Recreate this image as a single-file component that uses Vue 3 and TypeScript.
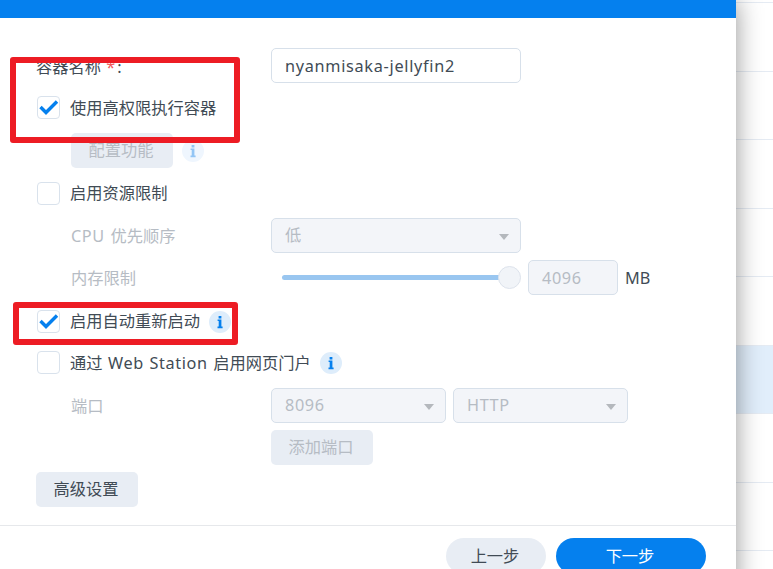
<script setup lang="ts">
const listRows = [false, false, false, false, false, false, true, false, false]
</script>

<template>
  <div class="page">
    <section class="dialog">
      <div class="titlebar"></div>
      <div class="form">
        <div class="row row-name">
          <span class="label">容器名称 <em class="req">*</em><span class="colon">:</span></span>
          <div class="field wide"><span class="lat name">nyanmisaka-jellyfin2</span></div>
        </div>

        <div class="row row-check1">
          <span class="box"><svg viewBox="0 0 21 21" class="tick"><path d="M2.5 10 L8 15.5 L19 4.5" /></svg></span>
          <span class="check-text low">使用高权限执行容器</span>
        </div>

        <div class="row row-config sub">
          <button class="btn disabled">配置功能</button>
          <svg class="info faint" viewBox="0 0 22 22"><circle cx="11" cy="11" r="11" /><path d="M9.6 5h2.8v2.4H9.6zM8.6 8.4h3.8v7.2h1.2v1.6H8.5v-1.6h1.2v-5.6H8.6z" /></svg>
        </div>

        <div class="row row-res">
          <span class="box"></span>
          <span class="check-text cjk">启用资源限制</span>
        </div>

        <div class="row row-cpu sub">
          <span class="sub-label low"><span class="lat">CPU </span>优先顺序</span>
          <div class="field wide select off"><span class="cjk">低</span><i class="caret"></i></div>
        </div>

        <div class="row row-mem sub">
          <span class="sub-label low">内存限制</span>
          <div class="slider">
            <div class="track"></div>
            <div class="thumb"></div>
          </div>
          <div class="field num off"><span class="lat">4096</span></div>
          <span class="unit">MB</span>
        </div>

        <div class="row row-auto">
          <span class="box"><svg viewBox="0 0 21 21" class="tick"><path d="M2.5 10 L8 15.5 L19 4.5" /></svg></span>
          <span class="check-text cjk">启用自动重新启动</span>
          <svg class="info" viewBox="0 0 22 22"><circle cx="11" cy="11" r="11" /><path d="M9.6 5h2.8v2.4H9.6zM8.6 8.4h3.8v7.2h1.2v1.6H8.5v-1.6h1.2v-5.6H8.6z" /></svg>
        </div>

        <div class="row row-web">
          <span class="box"></span>
          <span class="check-text low">通过<span class="lat"> Web Station </span>启用网页门户</span>
          <svg class="info" viewBox="0 0 22 22"><circle cx="11" cy="11" r="11" /><path d="M9.6 5h2.8v2.4H9.6zM8.6 8.4h3.8v7.2h1.2v1.6H8.5v-1.6h1.2v-5.6H8.6z" /></svg>
        </div>

        <div class="row row-port sub">
          <span class="sub-label low">端口</span>
          <div class="field port select off"><span class="lat raised">8096</span><i class="caret"></i></div>
          <div class="field proto select off"><span class="lat raised">HTTP</span><i class="caret"></i></div>
        </div>

        <div class="row row-add">
          <button class="btn disabled">添加端口</button>
        </div>

        <div class="row row-adv">
          <button class="btn">高级设置</button>
        </div>
      </div>

      <footer class="footer">
        <button class="pill prev">上一步</button>
        <button class="pill next">下一步</button>
      </footer>

      <div class="mark mark-a"></div>
      <div class="mark mark-b"></div>
    </section>

    <aside class="list">
      <div v-for="(active, i) in listRows" :key="i" class="list-row" :class="{ active }"></div>
    </aside>
  </div>
</template>

<style>
html, body { margin: 0; background: #fff; }
</style>

<style scoped>
.page {
  display: flex;
  width: 773px;
  height: 569px;
  overflow: hidden;
  font-family: "Noto Sans", "Noto Sans CJK SC", sans-serif;
  font-size: 16.25px;
  color: #414b55;
  background: #fff;
}
.dialog {
  position: relative;
  z-index: 1;
  flex: 0 0 736px;
  height: 620px;
  background: #fff;
  box-shadow: 0 0 24px rgba(0, 0, 0, 0.42);
}
.titlebar { height: 18px; background: #0580ee; }
.form { padding: 30px 0 0 36px; }
.row { display: flex; align-items: center; }
.sub { padding-left: 35px; }
.row-name { height: 35px; }
.row-check1 { height: 23px; margin-top: 13px; }
.row-config { height: 35px; margin-top: 14px; }
.row-res { height: 23px; margin-top: 14px; }
.row-cpu { height: 35px; margin-top: 13px; }
.row-mem { height: 35px; margin-top: 7px; }
.row-auto { height: 23px; margin-top: 15px; }
.row-web { height: 23px; margin-top: 18px; }
.row-port { height: 35px; margin-top: 14px; }
.row-add { height: 35px; margin-top: 7px; padding-left: 235px; }
.row-adv { height: 35px; margin-top: 7px; }

.cjk { padding-bottom: 3px; }
.low { padding-bottom: 1px; }
.raised { padding-bottom: 2px; }
.lat { letter-spacing: 0.6px; word-spacing: 0.8px; white-space: pre; }
.name { letter-spacing: 0.7px; }

.label { width: 235px; flex: none; }
.req { color: #ed1c24; font-style: normal; margin-left: 1px; opacity: 0.75; }
.colon { margin-left: 2px; }
.sub-label { width: 200px; flex: none; color: #b6bcc4; }

.box {
  flex: none;
  box-sizing: border-box;
  width: 23px;
  height: 23px;
  margin-left: 1px;
  border: 1.25px solid #d9e2ec;
  border-radius: 4px;
  background: #fff;
}
.tick { display: block; width: 21px; height: 21px; overflow: visible; }
.tick path { fill: none; stroke: #0580ee; stroke-width: 3.4; }
.check-text { margin-left: 10px; }

.field {
  box-sizing: border-box;
  height: 35px;
  border: 1px solid #d7e0ea;
  border-radius: 5px;
  padding: 0 13px;
  display: flex;
  align-items: center;
  justify-content: space-between;
  flex: none;
}
.wide { width: 250px; }
.port { width: 175px; }
.proto { width: 175px; margin-left: 7px; }
.num { width: 90px; margin-left: 7px; }
.off { background: #f3f5f9; color: #b6bcc4; }
.caret {
  width: 0;
  height: 0;
  border-left: 5.5px solid transparent;
  border-right: 5.5px solid transparent;
  border-top: 6px solid #b4b8bd;
  margin-top: 2px;
  margin-right: -1.5px;
}
.unit { margin-left: 7px; }

.slider {
  position: relative;
  flex: none;
  width: 250px;
  height: 23px;
  display: flex;
  align-items: center;
  padding-left: 11px;
  box-sizing: border-box;
}
.track { width: 225px; height: 5px; border-radius: 3px; background: #99c6f0; }
.thumb {
  position: absolute;
  right: 0;
  top: 0;
  box-sizing: border-box;
  width: 23px;
  height: 23px;
  border-radius: 50%;
  border: 1px solid #dde3ec;
  background: #f1f4f8;
}

.btn {
  box-sizing: border-box;
  width: 102px;
  height: 35px;
  border: 0;
  border-radius: 5px;
  padding: 0 2px 3px 0;
  background: #e8edf4;
  color: #414b55;
  font: inherit;
}
.btn.disabled { color: #b6bcc4; }

.info { flex: none; width: 22px; height: 22px; margin-left: 9px; }
.info circle { fill: #deedfb; }
.info path { fill: #0580ee; }
.info.faint circle { fill: #eff6fe; }
.info.faint path { fill: #92c5f5; }

.footer {
  margin-top: 18px;
  border-top: 1px solid #e6e8eb;
  padding: 12px 30px 0 0;
  display: flex;
  justify-content: flex-end;
  gap: 10px;
}
.pill {
  height: 36px;
  border: 0;
  border-radius: 18px;
  padding: 0 2px 2px 0;
  font: inherit;
}
.prev { width: 100px; background: #e8edf4; color: #414b55; }
.next { width: 150px; background: #0580ee; color: #fff; }

.mark {
  position: absolute;
  box-sizing: border-box;
  border: 6px solid #ed1c24;
  border-radius: 3px;
  pointer-events: none;
}
.mark-a { left: 10px; top: 57px; width: 230px; height: 86px; }
.mark-b { left: 13px; top: 302px; width: 225px; height: 43px; }

.list { flex: 1; margin-top: -65.5px; }
.list-row {
  box-sizing: border-box;
  height: 68.5px;
  border-bottom: 1px solid #e5ebf3;
}
.list-row.active { background: #e1eefb; }
</style>
